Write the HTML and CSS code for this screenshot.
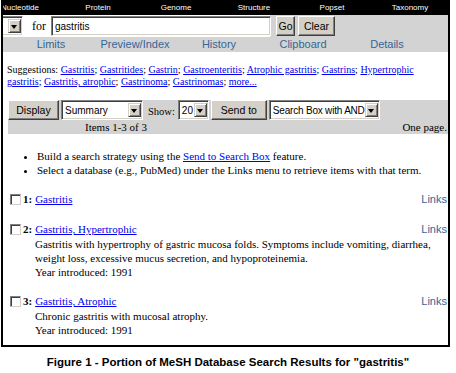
FILE: index.html
```html
<!DOCTYPE html>
<html lang="en">
<head>
  <meta charset="UTF-8">
  <title>MeSH Database Search Results</title>
  <link rel="stylesheet" href="styles.css">
</head>
<body>

<div class="frame">
  <div class="dbbar">
    <span>Nucleotide</span>
    <span>Protein</span>
    <span>Genome</span>
    <span>Structure</span>
    <span>Popset</span>
    <span>Taxonomy</span>
  </div>

  <div class="searchrow">
    <span class="sel cut"><span class="val"></span><span class="arr"></span></span>
    <span class="for">for</span>
    <span class="input">gastritis</span>
    <span class="btn go">Go</span>
    <span class="btn clear">Clear</span>
  </div>

  <div class="tabs">
    <a>Limits</a>
    <a>Preview/Index</a>
    <a>History</a>
    <a>Clipboard</a>
    <a>Details</a>
  </div>

  <p class="suggest">
    Suggestions: <a href="#">Gastritis</a>; <a href="#">Gastritides</a>; <a href="#">Gastrin</a>; <a href="#">Gastroenteritis</a>; <a href="#">Atrophic gastritis</a>; <a href="#">Gastrins</a>; <a href="#">Hypertrophic<br>gastritis</a>; <a href="#">Gastritis, atrophic</a>; <a href="#">Gastrinoma</a>; <a href="#">Gastrinomas</a>; <a href="#">more...</a>
  </p>

  <div class="toolbar">
    <div class="tools">
      <span class="btn display">Display</span>
      <span class="sel summary"><span class="val">Summary</span><span class="arr"></span></span>
      <span class="show">Show:</span>
      <span class="sel count"><span class="val">20</span><span class="arr"></span></span>
      <span class="btn sendto">Send to</span>
      <span class="sel target"><span class="val">Search Box with AND</span><span class="arr"></span></span>
    </div>
    <div class="pager">
      <span class="items">Items 1-3 of 3</span>
      <span class="pages">One page.</span>
    </div>
  </div>

  <ul class="notes">
    <li>Build a search strategy using the <a href="#">Send to Search Box</a> feature.</li>
    <li>Select a database (e.g., PubMed) under the Links menu to retrieve items with that term.</li>
  </ul>

  <div class="item">
    <div class="head">
      <span class="check"></span><b>1:</b> <a href="#">Gastritis</a>
      <span class="links">Links</span>
    </div>
  </div>

  <div class="item">
    <div class="head">
      <span class="check"></span><b>2:</b> <a href="#">Gastritis, Hypertrophic</a>
      <span class="links">Links</span>
    </div>
    <div class="desc">
      Gastritis with hypertrophy of gastric mucosa folds. Symptoms include vomiting, diarrhea, weight loss, excessive mucus secretion, and hypoproteinemia.<br>
      Year introduced: 1991
    </div>
  </div>

  <div class="item">
    <div class="head">
      <span class="check"></span><b>3:</b> <a href="#">Gastritis, Atrophic</a>
      <span class="links">Links</span>
    </div>
    <div class="desc">
      Chronic gastritis with mucosal atrophy.<br>
      Year introduced: 1991
    </div>
  </div>
</div>

<p class="caption">Figure 1 - Portion of MeSH Database Search Results for "gastritis"</p>

</body>
</html>
```

FILE: styles.css
```css
body{
  margin: 0;
  font-family: "Liberation Serif", "Times New Roman", serif;
  color: #000;
  background: #fff;
}

a{
  color: #0000ee;
}

.frame{
  width: 449px;
  height: 347px;
  margin-left: 1px;
  border: 2px solid #000;
  border-top: none;
  box-sizing: border-box;
  overflow: hidden;
}

/* database bar */
.dbbar{
  display: flex;
  height: 15px;
  margin-left: -2px;
  margin-right: -2px;
  background: #000;
  overflow: hidden;
}

.dbbar span{
  flex: 0 0 78px;
  color: #fff;
  font: 8px/15px "Liberation Sans", Arial, sans-serif;
  text-align: center;
}

.dbbar span:first-child{
  margin-left: -20px;
}

/* windows-classic controls */
.btn{
  display: inline-flex;
  align-items: center;
  justify-content: center;
  height: 20px;
  box-sizing: border-box;
  background: #d4d0c8;
  border: 1px solid;
  border-color: #fff #404040 #404040 #fff;
  box-shadow: inset -1px -1px #808080;
  font: 10.5px "Liberation Sans", Arial, sans-serif;
}

.sel{
  display: inline-flex;
  align-items: center;
  height: 20px;
  box-sizing: border-box;
  background: #fff;
  border: 1px solid;
  border-color: #808080 #fff #fff #808080;
  box-shadow: inset 1px 1px #404040, inset -1px -1px #d4d0c8;
  padding: 2px 1px 2px 2px;
  font: 10px "Liberation Sans", Arial, sans-serif;
}

.sel .val{
  flex: 1;
  padding-left: 1px;
  white-space: nowrap;
  overflow: hidden;
}

.sel .arr{
  position: relative;
  flex: 0 0 13px;
  height: 14px;
  box-sizing: border-box;
  background: #d4d0c8;
  border: 1px solid;
  border-color: #d4d0c8 #404040 #404040 #d4d0c8;
  box-shadow: inset 1px 1px #fff, inset -1px -1px #808080;
}

.sel .arr:after{
  content: "";
  position: absolute;
  left: 2px;
  top: 5px;
  border-left: 3.5px solid transparent;
  border-right: 3.5px solid transparent;
  border-top: 4px solid #000;
}

/* search row */
.searchrow{
  display: flex;
  align-items: center;
  height: 22px;
  background: linear-gradient(to right, #fff 267px, #d3d3d3 267px);
}

.sel.cut{
  width: 40px;
  margin-left: -20px;
}

.for{
  margin-left: 9px;
  font-size: 12px;
}

.input{
  display: flex;
  align-items: center;
  width: 220px;
  height: 20px;
  margin-left: 5px;
  padding-left: 3px;
  box-sizing: border-box;
  background: #fff;
  border: 1px solid;
  border-color: #808080 #fff #fff #808080;
  box-shadow: inset 1px 1px #404040, inset -1px -1px #d4d0c8;
  font: 10px "Liberation Sans", Arial, sans-serif;
}

.go{
  width: 19px;
  margin-left: 5px;
}

.clear{
  width: 37px;
  margin-left: 3px;
}

/* tabs */
.tabs{
  display: flex;
  height: 15px;
  padding-left: 6px;
  background: #d3d3d3;
}

.tabs a{
  flex: 0 0 84px;
  color: #336699;
  font: 11px/15px "Liberation Sans", Arial, sans-serif;
  text-align: center;
}

/* suggestions */
.suggest{
  margin: 12px 0 0 4px;
  font-size: 10px;
  line-height: 12px;
}

/* toolbar */
.toolbar{
  margin: 12px 0 0 5px;
  background: #d3d3d3;
}

.tools{
  display: flex;
  align-items: center;
  height: 20px;
}

.display{
  width: 51px;
}

.summary{
  width: 82px;
  margin-left: 2px;
}

.show{
  margin: 3px 3px 0 5px;
  font-size: 10.5px;
}

.count{
  width: 31px;
}

.sendto{
  width: 56px;
  margin-left: 2px;
}

.target{
  width: 111px;
  margin-left: 2px;
  letter-spacing: -0.2px;
}

.pager{
  display: flex;
  justify-content: space-between;
  height: 14px;
  padding: 0 1px 0 77px;
  font-size: 11px;
  line-height: 14px;
}

/* notes */
.notes{
  margin: 15px 0 0;
  padding-left: 34px;
  font-size: 11px;
  line-height: 14px;
}

/* result items */
.item{
  margin-top: 14px;
  font-size: 11px;
}

.item:first-of-type{
  margin-top: 12px;
}

.head{
  display: flex;
  align-items: center;
  height: 16px;
  padding-left: 7px;
}

.check{
  width: 11px;
  height: 11px;
  margin-right: 2px;
  box-sizing: border-box;
  border: 1px solid;
  border-color: #808080 #d4d0c8 #d4d0c8 #808080;
  box-shadow: inset 1px 1px #404040;
  background: #fff;
}

.head b{
  margin-right: 3px;
}

.links{
  margin-left: auto;
  padding-right: 1px;
  color: #336699;
  font: 11px "Liberation Sans", Arial, sans-serif;
}

.desc{
  padding-left: 32px;
  line-height: 14px;
}

.caption{
  margin: 9px 0 0;
  text-align: center;
  font: bold 11.5px "Liberation Sans", Arial, sans-serif;
}
```
